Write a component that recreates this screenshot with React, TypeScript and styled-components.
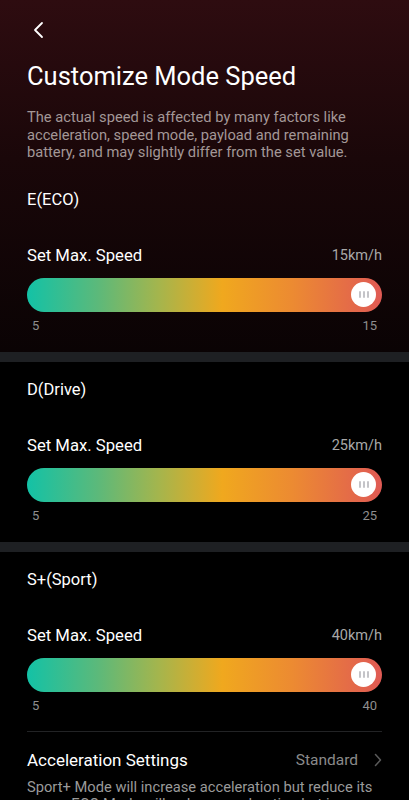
import React from "react";
import styled, { createGlobalStyle } from "styled-components";

const GlobalStyle = createGlobalStyle`
  html, body {
    margin: 0;
    padding: 0;
    background: #000;
    font-family: Roboto, "Noto Sans", sans-serif;
    color: #fff;
  }
`;

const Page = styled.div`
  width: 409px;
  min-height: 800px;
  background: #000;
`;

const Header = styled.div`
  background: linear-gradient(180deg, #2e0c10 0%, #1a0709 45%, #0a0304 100%);
`;

const TopBar = styled.div`
  height: 60px;
  padding: 18px 0 0 27px;
  box-sizing: border-box;
`;

const BackButton = styled.button`
  width: 24px;
  height: 24px;
  padding: 0;
  border: none;
  background: none;
  display: flex;
  align-items: center;
  justify-content: center;
`;

const Title = styled.h1`
  margin: 0;
  padding: 0 27px;
  font-size: 25.5px;
  font-weight: 400;
  line-height: 32px;
  color: #fff;
`;

const Intro = styled.p`
  margin: 17px 0 0;
  padding: 0 27px;
  font-size: 14.7px;
  line-height: 17.5px;
  color: #a39797;
`;

const Section = styled.section<{ $first?: boolean }>`
  padding: ${(p) => (p.$first ? "27px" : "17px")} 27px 18px;
`;

const Band = styled.div`
  height: 10px;
  background: #1e2023;
`;

const ModeLabel = styled.div`
  font-size: 16.5px;
  line-height: 22px;
  color: #fff;
`;

const SpeedRow = styled.div`
  margin-top: 34px;
  height: 22px;
  display: flex;
  align-items: center;
  justify-content: space-between;
`;

const SpeedName = styled.span`
  font-size: 16.7px;
  color: #fff;
`;

const SpeedValue = styled.span`
  font-size: 14.5px;
  color: #a8a8a8;
`;

const Track = styled.div`
  margin-top: 11px;
  height: 34px;
  border-radius: 17px;
  background: linear-gradient(90deg, #13c2a6 0%, #5cb97a 20%, #a4b54d 37%, #f0a81e 55%, #ec8a32 75%, #e05a54 100%);
  display: flex;
  align-items: center;
  justify-content: flex-end;
  padding-right: 6px;
`;

const Thumb = styled.div`
  width: 25px;
  height: 25px;
  border-radius: 50%;
  background: #fff;
  display: flex;
  align-items: center;
  justify-content: center;
  gap: 2px;
`;

const Grip = styled.span`
  width: 2px;
  height: 7px;
  border-radius: 1px;
  background: #c4c4c8;
`;

const Range = styled.div`
  margin-top: 6px;
  padding: 0 5px;
  height: 16px;
  display: flex;
  justify-content: space-between;
  align-items: center;
  font-size: 13px;
  color: #8e8e8e;
`;

const Divider = styled.div`
  margin-top: 17px;
  height: 1px;
  background: #222325;
`;

const SettingRow = styled.div`
  margin-top: 17px;
  height: 22px;
  display: flex;
  align-items: center;
  justify-content: space-between;
`;

const SettingName = styled.span`
  font-size: 17px;
  color: #fff;
`;

const SettingValue = styled.span`
  display: flex;
  align-items: center;
  gap: 16px;
  font-size: 15.5px;
  color: #8a8a8a;
`;

const Note = styled.p`
  margin: 8px 0 0;
  font-size: 14.7px;
  line-height: 17.5px;
  color: #9a9a9a;
`;

interface ModeProps {
  label: string;
  max: number;
  min: number;
  first?: boolean;
  children?: React.ReactNode;
}

const ModeSection = ({ label, max, min, first, children }: ModeProps) => (
  <Section $first={first}>
    <ModeLabel>{label}</ModeLabel>
    <SpeedRow>
      <SpeedName>Set Max. Speed</SpeedName>
      <SpeedValue>{max}km/h</SpeedValue>
    </SpeedRow>
    <Track>
      <Thumb>
        <Grip />
        <Grip />
        <Grip />
      </Thumb>
    </Track>
    <Range>
      <span>{min}</span>
      <span>{max}</span>
    </Range>
    {children}
  </Section>
);

export default function App() {
  return (
    <Page>
      <GlobalStyle />
      <Header>
        <TopBar>
          <BackButton aria-label="Back">
            <svg width="14" height="18" viewBox="0 0 14 18" fill="none">
              <path d="M10 2 L3 9 L10 16" stroke="#fff" strokeWidth="1.8" strokeLinecap="round" strokeLinejoin="round" />
            </svg>
          </BackButton>
        </TopBar>
        <Title>Customize Mode Speed</Title>
        <Intro>
          The actual speed is affected by many factors like acceleration, speed mode, payload and remaining
          battery, and may slightly differ from the set value.
        </Intro>
        <ModeSection label="E(ECO)" min={5} max={15} first />
      </Header>
      <Band />
      <ModeSection label="D(Drive)" min={5} max={25} />
      <Band />
      <ModeSection label="S+(Sport)" min={5} max={40}>
        <Divider />
        <SettingRow>
          <SettingName>Acceleration Settings</SettingName>
          <SettingValue>
            Standard
            <svg width="8" height="14" viewBox="0 0 8 14" fill="none">
              <path d="M1.5 1.5 L6.5 7 L1.5 12.5" stroke="#5a5a5a" strokeWidth="1.5" strokeLinecap="round" strokeLinejoin="round" />
            </svg>
          </SettingValue>
        </SettingRow>
        <Note>
          Sport+ Mode will increase acceleration but reduce its range. ECO Mode will reduce acceleration but increase its
          range.
        </Note>
      </ModeSection>
    </Page>
  );
}
